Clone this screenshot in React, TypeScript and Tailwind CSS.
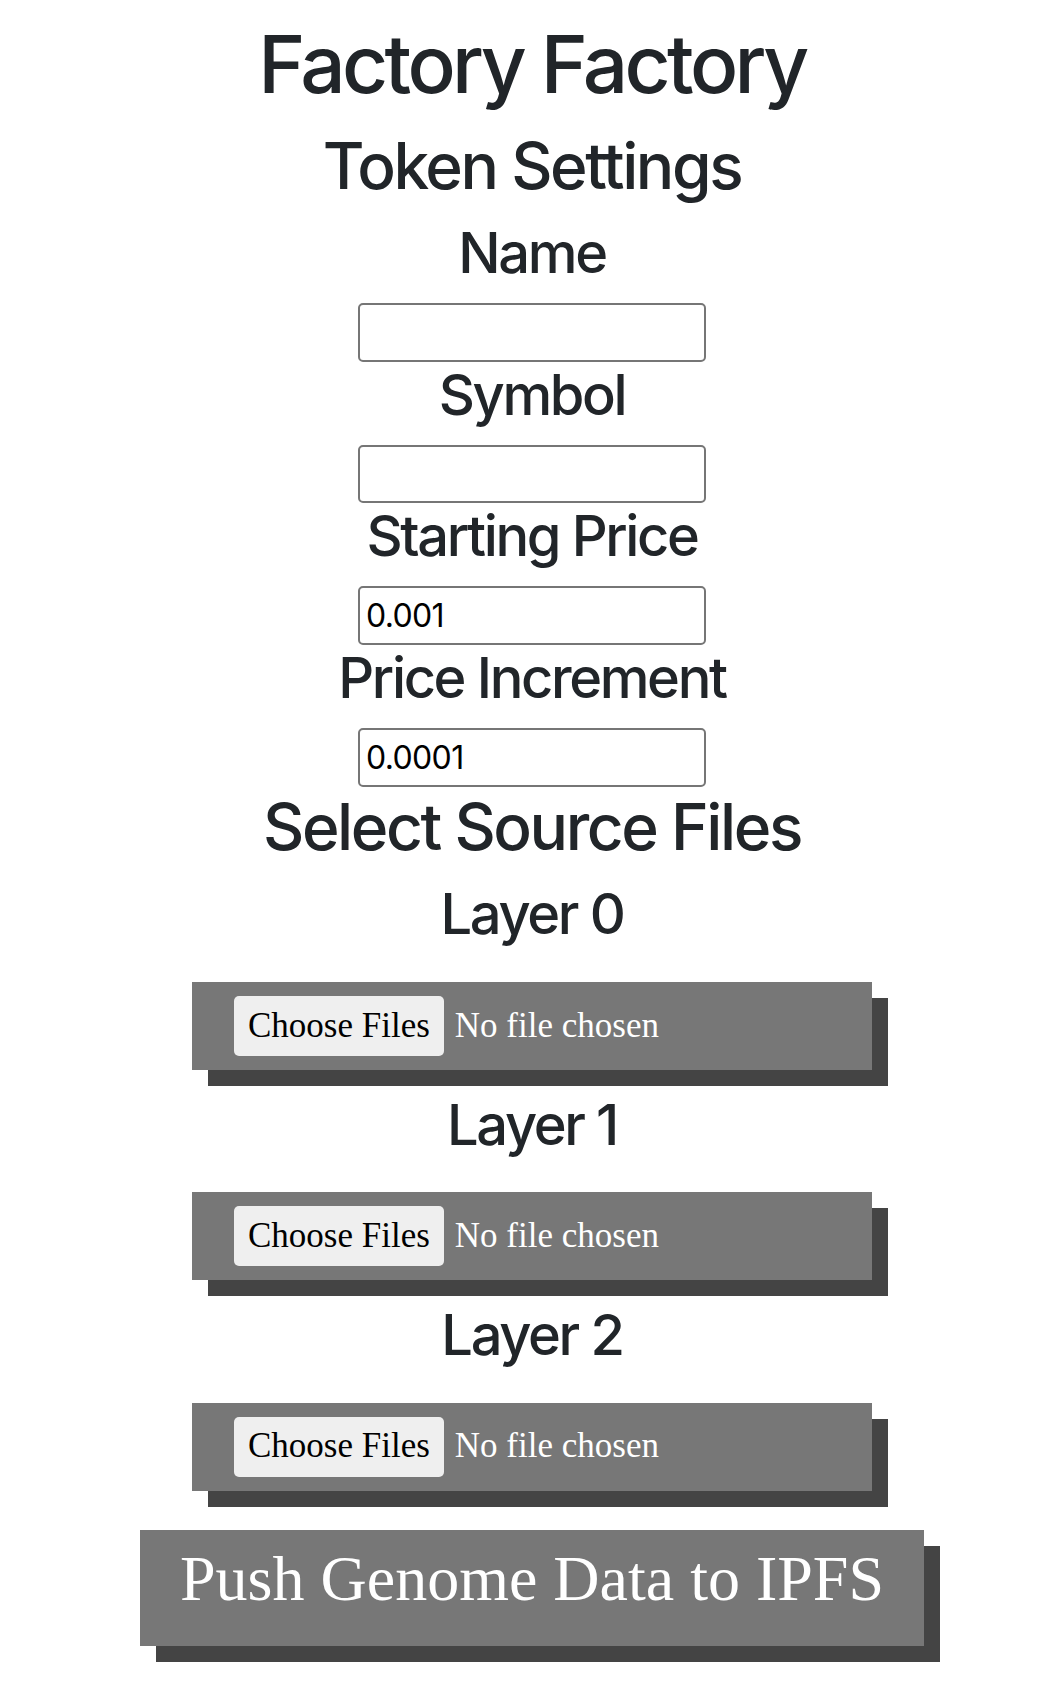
import { PropsWithChildren } from "react";

const headingFont = { fontFamily: "Inter, 'Noto Sans', sans-serif" };

type FieldProps = {
    label: string;
    value?: string;
};

const Field = ({ label, value }: FieldProps) => {
    return (
        <>
            <h3 className="text-[56px] leading-[67.2px] font-medium tracking-[-0.042em] mb-[16px] text-[#212529]">{label}</h3>
            <input
                type="text"
                defaultValue={value}
                className="w-[348px] h-[58.5px] border-2 border-[#767676] rounded-[5px] px-[6px] text-[32px] tracking-[-0.02em] text-black outline-none bg-white"
            />
        </>
    );
};

const FilePicker = ({ layer }: { layer: number }) => {
    return (
        <>
            <h3 className="text-[56px] leading-[67.2px] font-medium tracking-[-0.042em] mb-[33.5px] text-[#212529]">Layer {layer}</h3>
            <label className="w-[680px] h-[88px] mb-[21.5px] pl-[42px] flex items-center bg-[#777777] shadow-[16px_16px_0_#444444] font-['Liberation_Serif',serif] text-[35px] cursor-pointer">
                <input type="file" multiple className="hidden" />
                <span className="h-[60px] px-[14px] flex items-center bg-[#efefef] rounded-[5px] text-black">
                    Choose Files
                </span>
                <span className="ml-[11px] text-white">No file chosen</span>
            </label>
        </>
    );
};

const PushButton = ({ children }: PropsWithChildren) => {
    return (
        <button className="mt-[18px] w-[784px] h-[116px] pt-[12px] flex justify-center items-start bg-[#777777] shadow-[16px_16px_0_#444444] font-['Liberation_Serif',serif] text-[64px] leading-[73.6px] text-white">
            {children}
        </button>
    );
};

export default function App() {
    return (
        <div className="w-full min-h-[1694px] bg-white pt-[16px] pl-[16px] flex flex-col items-center text-center" style={headingFont}>
            <h1 className="text-[80px] leading-[96px] font-medium tracking-[-0.045em] mb-[16px] text-[#212529]">Factory Factory</h1>
            <h2 className="text-[64px] leading-[76.8px] font-medium tracking-[-0.038em] mb-[15px] text-[#212529]">Token Settings</h2>
            <Field label="Name" />
            <Field label="Symbol" />
            <Field label="Starting Price" value="0.001" />
            <Field label="Price Increment" value="0.0001" />
            <h2 className="mt-[2px] text-[64px] leading-[76.8px] font-medium tracking-[-0.038em] mb-[16px] text-[#212529]">Select Source Files</h2>
            <FilePicker layer={0} />
            <FilePicker layer={1} />
            <FilePicker layer={2} />
            <PushButton>Push Genome Data to IPFS</PushButton>
        </div>
    );
}
